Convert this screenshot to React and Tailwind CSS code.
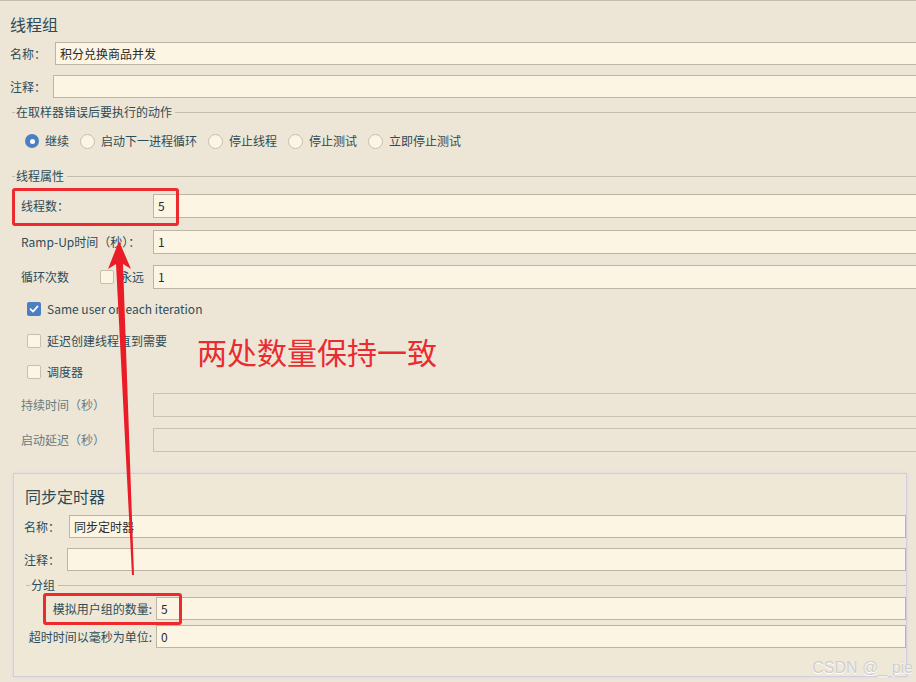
import React from "react";

const FONT = { fontFamily: '"Noto Sans CJK SC", "Noto Sans", sans-serif' };

function Input({ value, className = "", disabled = false }) {
  return (
    <div
      className={
        "flex-1 h-full flex items-center border-y border-l pl-[4px] text-[12px] text-[#2a2a2a] " +
        (disabled ? "bg-[#ede6d6] border-[#c9c1b1] " : "bg-[#fcf5e3] border-[#bcb4a4] ") +
        className
      }
    >
      {value}
    </div>
  );
}

function Radio({ checked, label }) {
  return (
    <div className="flex items-center mr-[11px]">
      {checked ? (
        <span className="w-[14px] h-[14px] rounded-full bg-[#4a80c2] flex items-center justify-center">
          <span className="w-[5px] h-[5px] rounded-full bg-white" />
        </span>
      ) : (
        <span className="w-[15px] h-[15px] rounded-full bg-[#fcf5e3] border border-[#c7bfae]" />
      )}
      <span className="ml-[6px] text-[12px] text-[#2e4c57] whitespace-nowrap">{label}</span>
    </div>
  );
}

function Check({ checked }) {
  return checked ? (
    <span className="w-[14px] h-[14px] shrink-0 rounded-[2px] bg-[#4a80c2] flex items-center justify-center">
      <svg width="10" height="10" viewBox="0 0 10 10">
        <path d="M1.5 5.2 L4 7.6 L8.6 2.4" stroke="white" strokeWidth="1.7" fill="none" strokeLinecap="round" strokeLinejoin="round" />
      </svg>
    </span>
  ) : (
    <span className="w-[14px] h-[14px] shrink-0 rounded-[2px] bg-[#fcf5e3] border border-[#c7bfae]" />
  );
}

function Legend({ text, lineLeft, textLeft }) {
  return (
    <div className="flex items-center h-[16px]">
      <span className="h-px bg-[#c4bcad]" style={{ marginLeft: lineLeft, width: textLeft - lineLeft - 1 }} />
      <span className="px-[1px] text-[12px] text-[#2e4c57] leading-[16px] whitespace-nowrap">{text}</span>
      <span className="flex-1 h-px bg-[#c4bcad] ml-[2px]" />
    </div>
  );
}

const LBL = "text-[12px] text-[#2e4c57] shrink-0 whitespace-nowrap";

export default function App() {
  return (
    <div
      className="relative w-[916px] h-[682px] bg-[#ede6d6] border-t border-[#c4bcad] overflow-hidden flex flex-col"
      style={FONT}
    >
      {/* Title */}
      <div className="h-[41px] pl-[10px] pt-[12px]">
        <div className="text-[16px] leading-[22px] text-[#2e4c57]">线程组</div>
      </div>

      {/* 名称 */}
      <div className="h-[23px] flex items-center">
        <span className={"w-[55px] pl-[10px] " + LBL}>名称：</span>
        <Input value="积分兑换商品并发" />
      </div>
      {/* 注释 */}
      <div className="mt-[10px] h-[23px] flex items-center">
        <span className={"w-[53px] pl-[10px] " + LBL}>注释：</span>
        <Input value="" />
      </div>

      <div className="mt-[6px]">
        <Legend text="在取样器错误后要执行的动作" lineLeft={12} textLeft={16} />
      </div>

      <div className="mt-[12px] h-[18px] flex items-center pl-[25px]">
        <Radio checked label="继续" />
        <Radio label="启动下一进程循环" />
        <Radio label="停止线程" />
        <Radio label="停止测试" />
        <Radio label="立即停止测试" />
      </div>

      <div className="mt-[18px]">
        <Legend text="线程属性" lineLeft={12} textLeft={16} />
      </div>

      {/* 线程数 */}
      <div className="relative mt-[10px] h-[24px] flex items-center">
        <span className={"w-[153px] pl-[21px] " + LBL}>线程数：</span>
        <Input value="5" />
        <span className="absolute left-[12px] top-[-6px] w-[167px] h-[38px] border-[3px] border-[#ee2a2e] rounded-[3px]" />
      </div>
      {/* Ramp-Up */}
      <div className="mt-[12px] h-[24px] flex items-center">
        <span className={"w-[153px] pl-[21px] " + LBL}>Ramp-Up时间（秒）：</span>
        <Input value="1" />
      </div>
      {/* 循环次数 */}
      <div className="mt-[11px] h-[24px] flex items-center">
        <span className={"w-[100px] pl-[21px] " + LBL}>循环次数</span>
        <Check />
        <span className={"ml-[6px] w-[33px] " + LBL}>永远</span>
        <Input value="1" />
      </div>

      <div className="mt-[12px] h-[16px] flex items-center pl-[27px]">
        <Check checked />
        <span className={"ml-[6px] " + LBL}>Same user on each iteration</span>
      </div>
      <div className="mt-[16px] h-[16px] flex items-center pl-[27px]">
        <Check />
        <span className={"ml-[6px] " + LBL}>延迟创建线程直到需要</span>
      </div>
      <div className="mt-[15px] h-[16px] flex items-center pl-[27px]">
        <Check />
        <span className={"ml-[6px] " + LBL}>调度器</span>
      </div>

      <div className="mt-[13px] h-[24px] flex items-center">
        <span className="w-[153px] pl-[21px] text-[12px] text-[#667b82] shrink-0 whitespace-nowrap">持续时间（秒）</span>
        <Input value="" disabled />
      </div>
      <div className="mt-[11px] h-[24px] flex items-center">
        <span className="w-[153px] pl-[21px] text-[12px] text-[#667b82] shrink-0 whitespace-nowrap">启动延迟（秒）</span>
        <Input value="" disabled />
      </div>

      {/* Synchronizing timer panel */}
      <div className="mt-[21px] ml-[13px] w-[894px] h-[204px] border border-[#d2cee0] shadow-[0_0_3px_#d6d2e6] bg-[#efe8d7] flex flex-col">
        <div className="h-[33px] pl-[11px] pt-[11px]">
          <div className="text-[16px] leading-[22px] text-[#2e4c57]">同步定时器</div>
        </div>
        <div className="mt-[8px] h-[23px] flex items-center">
          <span className={"w-[55px] pl-[10px] " + LBL}>名称：</span>
          <Input value="同步定时器" className="border-r" />
        </div>
        <div className="mt-[10px] h-[23px] flex items-center">
          <span className={"w-[53px] pl-[10px] " + LBL}>注释：</span>
          <Input value="" className="border-r" />
        </div>
        <div className="mt-[6px]">
          <Legend text="分组" lineLeft={12} textLeft={17} />
        </div>
        <div className="relative mt-[4px] h-[23px] flex items-center">
          <span className={"w-[138px] text-right " + LBL}>模拟用户组的数量:</span>
          <span className="w-[4px] shrink-0" />
          <Input value="5" className="border-r" />
          <span className="absolute left-[29px] top-[-4px] w-[139px] h-[32px] border-[3px] border-[#ee2a2e] rounded-[3px]" />
        </div>
        <div className="mt-[5px] h-[23px] flex items-center">
          <span className={"w-[138px] text-right " + LBL}>超时时间以毫秒为单位:</span>
          <span className="w-[4px] shrink-0" />
          <Input value="0" className="border-r" />
        </div>
      </div>

      {/* Annotation overlay */}
      <div className="absolute left-[197px] top-[329px] text-[30px] leading-[42px] text-[#ea2b30] whitespace-nowrap">
        两处数量保持一致
      </div>
      <svg className="absolute left-0 top-0 pointer-events-none" width="916" height="682">
        <polygon
          points="119,240 131,268 123,263 134,574 132,574 116,263 108,268"
          fill="#ea1c27"
        />
      </svg>

      {/* Watermark */}
      <div
        className="absolute right-[3px] bottom-[5px] text-[16px] leading-[18px] text-[#cfcfcf] [text-shadow:0_1px_0_#ffffff]"
        style={{ fontFamily: '"Liberation Sans", Arial, sans-serif' }}
      >
        CSDN @_ pie
      </div>
    </div>
  );
}
